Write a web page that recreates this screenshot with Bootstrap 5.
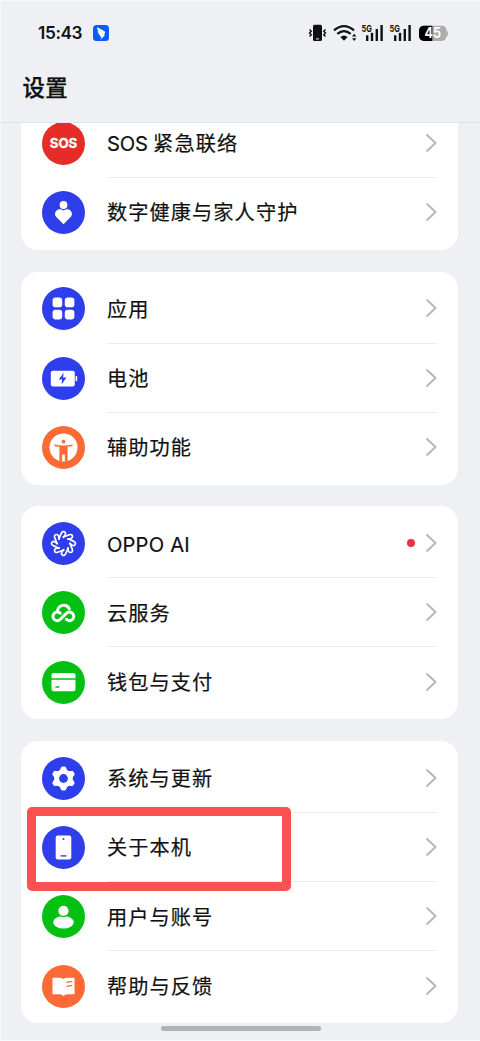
<!DOCTYPE html>
<html lang="zh-CN">
<head>
<meta charset="utf-8">
<meta name="viewport" content="width=device-width, initial-scale=1">
<title>设置</title>
<link href="https://cdn.jsdelivr.net/npm/bootstrap@5.3.0/dist/css/bootstrap.min.css" rel="stylesheet">
<style>
  body { background: #eff0f3; font-family: Inter, "Noto Sans CJK SC", sans-serif; color: #111; }
  .screen { width: 480px; height: 1041px; box-shadow: inset 1px 1px 0 #f7f8f9, inset 0 -1px 0 #f7f8f9; }
  .topbar { height: 123px; border-bottom: 1px solid #e2e3e6; }
  .statusbar { height: 66px; padding: 0 30px 0 38px; }
  .clock { font-size: 17.3px; font-weight: 600; line-height: 1; width: 55px; letter-spacing: -.4px; }
  .page-title { font-size: 22.4px; font-weight: 500; line-height: 44px; padding-left: 22.5px; letter-spacing: .4px; -webkit-text-stroke: .3px #111; }
  .settings { padding: 0 21.6px 0 21.4px; overflow: hidden; height: 918px; }
  .group { background: #fff; border-radius: 17px; padding: 2.8px 0; margin-bottom: 21.6px; }
  .group.scrolled { margin-top: -17px; }
  .item { height: 69.2px; padding: 0 21px; }
  .item > svg:first-child { width: 43px; height: 43px; margin-right: 21.5px; flex: none; }
  .item-body { border-bottom: 1px solid #ededef; height: 100%; font-size: 20.2px; letter-spacing: 1.1px; color: #111; -webkit-text-stroke: .2px #111; }
  .item-body > span:first-child { padding-top: 3px; }
  .item:last-child .item-body { border-bottom-color: transparent; }
  .latin { letter-spacing: .2px; }
  .chev { width: 12px; height: 20px; fill: none; stroke: #b4b4b6; stroke-width: 1.8; stroke-linecap: round; stroke-linejoin: round; }
  .dot { width: 8px; height: 8px; background: #e83345; margin-right: 10px; }
  .focus-frame { left: 5.5px; top: -5.6px; width: 264px; height: 84px; border: 9px solid #fb5151; border-radius: 5px; z-index: 2; }
  .homebar { width: 160px; height: 5.5px; left: 161px; bottom: 10px; background: #b2b3b4; }
</style>
</head>
<body>
<div class="screen position-relative overflow-hidden">
  <header class="topbar">
    <div class="statusbar d-flex align-items-center">
      <span class="clock">15:43</span>
      <svg width="16" height="16" viewBox="0 0 16 16"><rect width="16" height="16" rx="3.500" fill="#0a5cff"/><path d="M4 2.200C6.500 3.800 9.500 4.600 11.500 6.200C12.700 7.200 11.700 8.700 10.900 10H12.200L7.600 14.600L8.400 11.400H6.900L7.200 10.200C5.800 9.800 5.300 9 5.200 8.300L6.500 8.400C5 7.600 4.500 6.800 4.500 5.900L5.700 6.200C4.300 5 3.900 3.700 4 2.200Z" fill="#fff"/></svg>
      <svg class="ms-auto" width="150" height="26" viewBox="300 20 150 26">
        <rect x="313" y="24.800" width="9" height="16.200" rx="1.600" fill="#111"/><path d="M316 38.900h3" stroke="#eee" stroke-width="1"/>
        <path d="M309.500 29.500l1.800 1.700l-1.800 1.800l1.800 1.800l-1.800 1.800M325.500 29.500l-1.800 1.700l1.800 1.800l-1.800 1.800l1.800 1.800" fill="none" stroke="#111" stroke-width="1.400"/>
        <g fill="none" stroke="#111" stroke-width="2.200"><path d="M334 30.300Q344 21.800 354 30.300"/><path d="M337.300 33.900Q344 28.300 350.700 33.900"/></g>
        <path d="M340.300 37Q344 34 347.700 37L344 40.800Z" fill="#111"/>
        <path d="M352 36.500l2.200-2.700l2.200 2.700ZM352 38.200l2.200 2.700l2.200-2.700Z" fill="#111"/>
        <g id="signal" fill="#111">
          <text x="361.600" y="31.500" font-size="9.600" font-weight="700" textLength="10.400" lengthAdjust="spacingAndGlyphs">5G</text>
          <rect x="366" y="35.300" width="2.400" height="5.700"/><rect x="370.800" y="32.800" width="2.400" height="8.200"/><rect x="375.600" y="29" width="2.400" height="12"/><rect x="380.400" y="25" width="2.400" height="16"/>
        </g>
        <use href="#signal" x="28"/>
        <rect x="419" y="25.700" width="27.500" height="15.300" rx="4.800" fill="#acacac"/><path d="M432.300 25.700H423.800A4.800 4.800 0 0 0 419 30.500V36.200A4.800 4.800 0 0 0 423.800 41H432.300Z" fill="#000"/><path d="M446.500 30.500q1.500.5 1.500 3t-1.500 3Z" fill="#acacac"/>
        <text x="424.500" y="38.400" font-size="14" font-weight="700" fill="#fff" textLength="16.500" lengthAdjust="spacingAndGlyphs">45</text>
      </svg>
    </div>
    <h1 class="page-title m-0">设置</h1>
  </header>

  <main class="settings">
    <section class="group scrolled">
      <div class="item d-flex align-items-center">
        <svg viewBox="0 0 43 43"><circle cx="21.500" cy="21.500" r="21.500" fill="#e52d28"/><text x="21.500" y="26.300" font-size="13.200" font-weight="700" fill="#fff" stroke="#fff" stroke-width=".3" text-anchor="middle" textLength="27.500" lengthAdjust="spacingAndGlyphs">SOS</text></svg>
        <div class="item-body flex-grow-1 d-flex align-items-center"><span><span class="latin" style="letter-spacing:-.2px">SOS </span>紧急联络</span><svg class="chev ms-auto" viewBox="0 0 12 20"><path d="M2 2L10.500 10L2 18"/></svg></div>
      </div>
      <div class="item d-flex align-items-center">
        <svg viewBox="0 0 43 43"><circle cx="21.500" cy="21.500" r="21.500" fill="#2d3eea"/><path d="M21.500 33.300L14.300 26.100C10.700 21.800 15.500 15.200 21.500 19.600C27.500 15.200 32.300 21.800 28.700 26.100Z" fill="#fff"/><circle cx="21.500" cy="14" r="4.500" fill="#fff" stroke="#2d3eea" stroke-width="1.200"/></svg>
        <div class="item-body flex-grow-1 d-flex align-items-center"><span>数字健康与家人守护</span><svg class="chev ms-auto" viewBox="0 0 12 20"><path d="M2 2L10.500 10L2 18"/></svg></div>
      </div>
    </section>

    <section class="group">
      <div class="item d-flex align-items-center">
        <svg viewBox="0 0 43 43"><circle cx="21.500" cy="21.500" r="21.500" fill="#2d3eea"/><g fill="#fff"><rect x="10.600" y="10.600" width="9.600" height="9.600" rx="2.800"/><rect x="22.800" y="10.600" width="9.600" height="9.600" rx="2.800"/><rect x="10.600" y="22.800" width="9.600" height="9.600" rx="2.800"/><rect x="22.800" y="22.800" width="9.600" height="9.600" rx="2.800"/></g></svg>
        <div class="item-body flex-grow-1 d-flex align-items-center"><span>应用</span><svg class="chev ms-auto" viewBox="0 0 12 20"><path d="M2 2L10.500 10L2 18"/></svg></div>
      </div>
      <div class="item d-flex align-items-center">
        <svg viewBox="0 0 43 43"><circle cx="21.500" cy="21.500" r="21.500" fill="#2d3eea"/><rect x="8.800" y="13.700" width="24" height="15.800" rx="2" fill="#fff"/><path d="M33.600 19h.8q.8 0 .8.800v3.600q0 .8-.8.800h-.8Z" fill="#fff"/><path d="M21.700 15.800L16.800 22.500H20.200L19.500 27.400L24.500 20.600H21Z" fill="#2d3eea"/></svg>
        <div class="item-body flex-grow-1 d-flex align-items-center"><span>电池</span><svg class="chev ms-auto" viewBox="0 0 12 20"><path d="M2 2L10.500 10L2 18"/></svg></div>
      </div>
      <div class="item d-flex align-items-center">
        <svg viewBox="0 0 43 43"><circle cx="21.500" cy="21.500" r="21.500" fill="#fc6b35"/><circle cx="21.500" cy="21.500" r="14" fill="#fff"/><g fill="#fc6b35"><circle cx="21.500" cy="15.700" r="1.900"/><path d="M12.600 18.500Q21.500 20.300 30.400 18.500L30.700 19.900Q28 20.500 25.600 20.800V35.500H22.900V28.500H20.100V35.500H17.400V20.800Q15 20.500 12.300 19.900Z"/></g></svg>
        <div class="item-body flex-grow-1 d-flex align-items-center"><span>辅助功能</span><svg class="chev ms-auto" viewBox="0 0 12 20"><path d="M2 2L10.500 10L2 18"/></svg></div>
      </div>
    </section>

    <section class="group">
      <div class="item d-flex align-items-center">
        <svg viewBox="0 0 43 43"><circle cx="21.500" cy="21.500" r="21.500" fill="#2d3eea"/>
          <g fill="none" stroke="#fff" stroke-width="1.700" stroke-linecap="round" stroke-linejoin="round">
            <path id="petal" d="M16.800 17L19.400 11.200Q20.800 8.600 22.700 10Q24.100 11.200 23.300 12.800L21.400 15.300"/>
            <use href="#petal" transform="rotate(45 21.500 21.500)"/><use href="#petal" transform="rotate(90 21.500 21.500)"/><use href="#petal" transform="rotate(135 21.500 21.500)"/><use href="#petal" transform="rotate(180 21.500 21.500)"/><use href="#petal" transform="rotate(225 21.500 21.500)"/><use href="#petal" transform="rotate(270 21.500 21.500)"/><use href="#petal" transform="rotate(315 21.500 21.500)"/>
          </g></svg>
        <div class="item-body flex-grow-1 d-flex align-items-center"><span class="latin">OPPO AI</span><span class="dot rounded-circle ms-auto"></span><svg class="chev" viewBox="0 0 12 20"><path d="M2 2L10.500 10L2 18"/></svg></div>
      </div>
      <div class="item d-flex align-items-center">
        <svg viewBox="0 0 43 43"><circle cx="21.500" cy="21.500" r="21.500" fill="#05c012"/><g fill="none" stroke="#fff" stroke-width="3" stroke-linecap="round"><path d="M15.600 19.500A6.200 6.200 0 0 1 27.300 17.800"/><path d="M18.200 22.200A4.300 4.300 0 1 0 18.400 28.300L24.500 22.200A4.300 4.300 0 1 1 24.300 28.300"/></g></svg>
        <div class="item-body flex-grow-1 d-flex align-items-center"><span>云服务</span><svg class="chev ms-auto" viewBox="0 0 12 20"><path d="M2 2L10.500 10L2 18"/></svg></div>
      </div>
      <div class="item d-flex align-items-center">
        <svg viewBox="0 0 43 43"><circle cx="21.500" cy="21.500" r="21.500" fill="#05c012"/><rect x="9.500" y="12" width="24" height="18.300" rx="2.200" fill="#fff"/><path d="M9 18H34M13.400 26H17.400" stroke="#05c012" stroke-width="1.300"/></svg>
        <div class="item-body flex-grow-1 d-flex align-items-center"><span>钱包与支付</span><svg class="chev ms-auto" viewBox="0 0 12 20"><path d="M2 2L10.500 10L2 18"/></svg></div>
      </div>
    </section>

    <section class="group">
      <div class="item d-flex align-items-center">
        <svg viewBox="0 0 43 43"><circle cx="21.500" cy="21.500" r="21.500" fill="#2d3eea"/>
          <g fill="#fff"><circle cx="21.500" cy="21.500" r="9.300"/><path id="tooth" d="M17.500 14L19 10.600Q19.400 9.500 20.500 9.500H22.500Q23.600 9.500 24 10.600L25.500 14Z"/><use href="#tooth" transform="rotate(60 21.500 21.500)"/><use href="#tooth" transform="rotate(120 21.500 21.500)"/><use href="#tooth" transform="rotate(180 21.500 21.500)"/><use href="#tooth" transform="rotate(240 21.500 21.500)"/><use href="#tooth" transform="rotate(300 21.500 21.500)"/></g><circle cx="21.500" cy="21.500" r="4.400" fill="#2d3eea"/></svg>
        <div class="item-body flex-grow-1 d-flex align-items-center"><span>系统与更新</span><svg class="chev ms-auto" viewBox="0 0 12 20"><path d="M2 2L10.500 10L2 18"/></svg></div>
      </div>
      <div class="item d-flex align-items-center position-relative">
        <svg viewBox="0 0 43 43"><circle cx="21.500" cy="21.500" r="21.500" fill="#2d3eea"/><rect x="13.700" y="9.500" width="15.600" height="24" rx="2" fill="#fff"/><circle cx="21.500" cy="12.900" r="1" fill="#2d3eea"/><path d="M18.600 29.900h5.800" stroke="#2d3eea" stroke-width="1.400"/></svg>
        <div class="item-body flex-grow-1 d-flex align-items-center"><span>关于本机</span><svg class="chev ms-auto" viewBox="0 0 12 20"><path d="M2 2L10.500 10L2 18"/></svg></div>
        <div class="focus-frame position-absolute"></div>
      </div>
      <div class="item d-flex align-items-center">
        <svg viewBox="0 0 43 43"><circle cx="21.500" cy="21.500" r="21.500" fill="#05c012"/><ellipse cx="21.500" cy="27.300" rx="10.200" ry="6.300" fill="#fff"/><circle cx="21.500" cy="15.900" r="5.700" fill="#fff" stroke="#05c012" stroke-width="1.200"/></svg>
        <div class="item-body flex-grow-1 d-flex align-items-center"><span>用户与账号</span><svg class="chev ms-auto" viewBox="0 0 12 20"><path d="M2 2L10.500 10L2 18"/></svg></div>
      </div>
      <div class="item d-flex align-items-center">
        <svg viewBox="0 0 43 43"><circle cx="21.500" cy="21.500" r="21.500" fill="#fc6b35"/><path d="M11.300 12.700H17.500Q20 12.700 21.500 14Q23 12.700 25.500 12.700H31.700Q32.500 12.700 32.500 13.500V29.300H25.500Q23 29.300 21.500 30.900Q20 29.300 17.500 29.300H10.500V13.500Q10.500 12.700 11.300 12.700Z" fill="#fff"/><path d="M24.600 17.600Q27 16.400 30.300 16.700M24.600 21.600Q27 20.400 30.300 20.700" fill="none" stroke="#fc6b35" stroke-width="1.300"/></svg>
        <div class="item-body flex-grow-1 d-flex align-items-center"><span>帮助与反馈</span><svg class="chev ms-auto" viewBox="0 0 12 20"><path d="M2 2L10.500 10L2 18"/></svg></div>
      </div>
    </section>
  </main>
  <div class="homebar position-absolute rounded-pill"></div>
</div>
<script src="https://cdn.jsdelivr.net/npm/bootstrap@5.3.0/dist/js/bootstrap.bundle.min.js"></script>
</body>
</html>
